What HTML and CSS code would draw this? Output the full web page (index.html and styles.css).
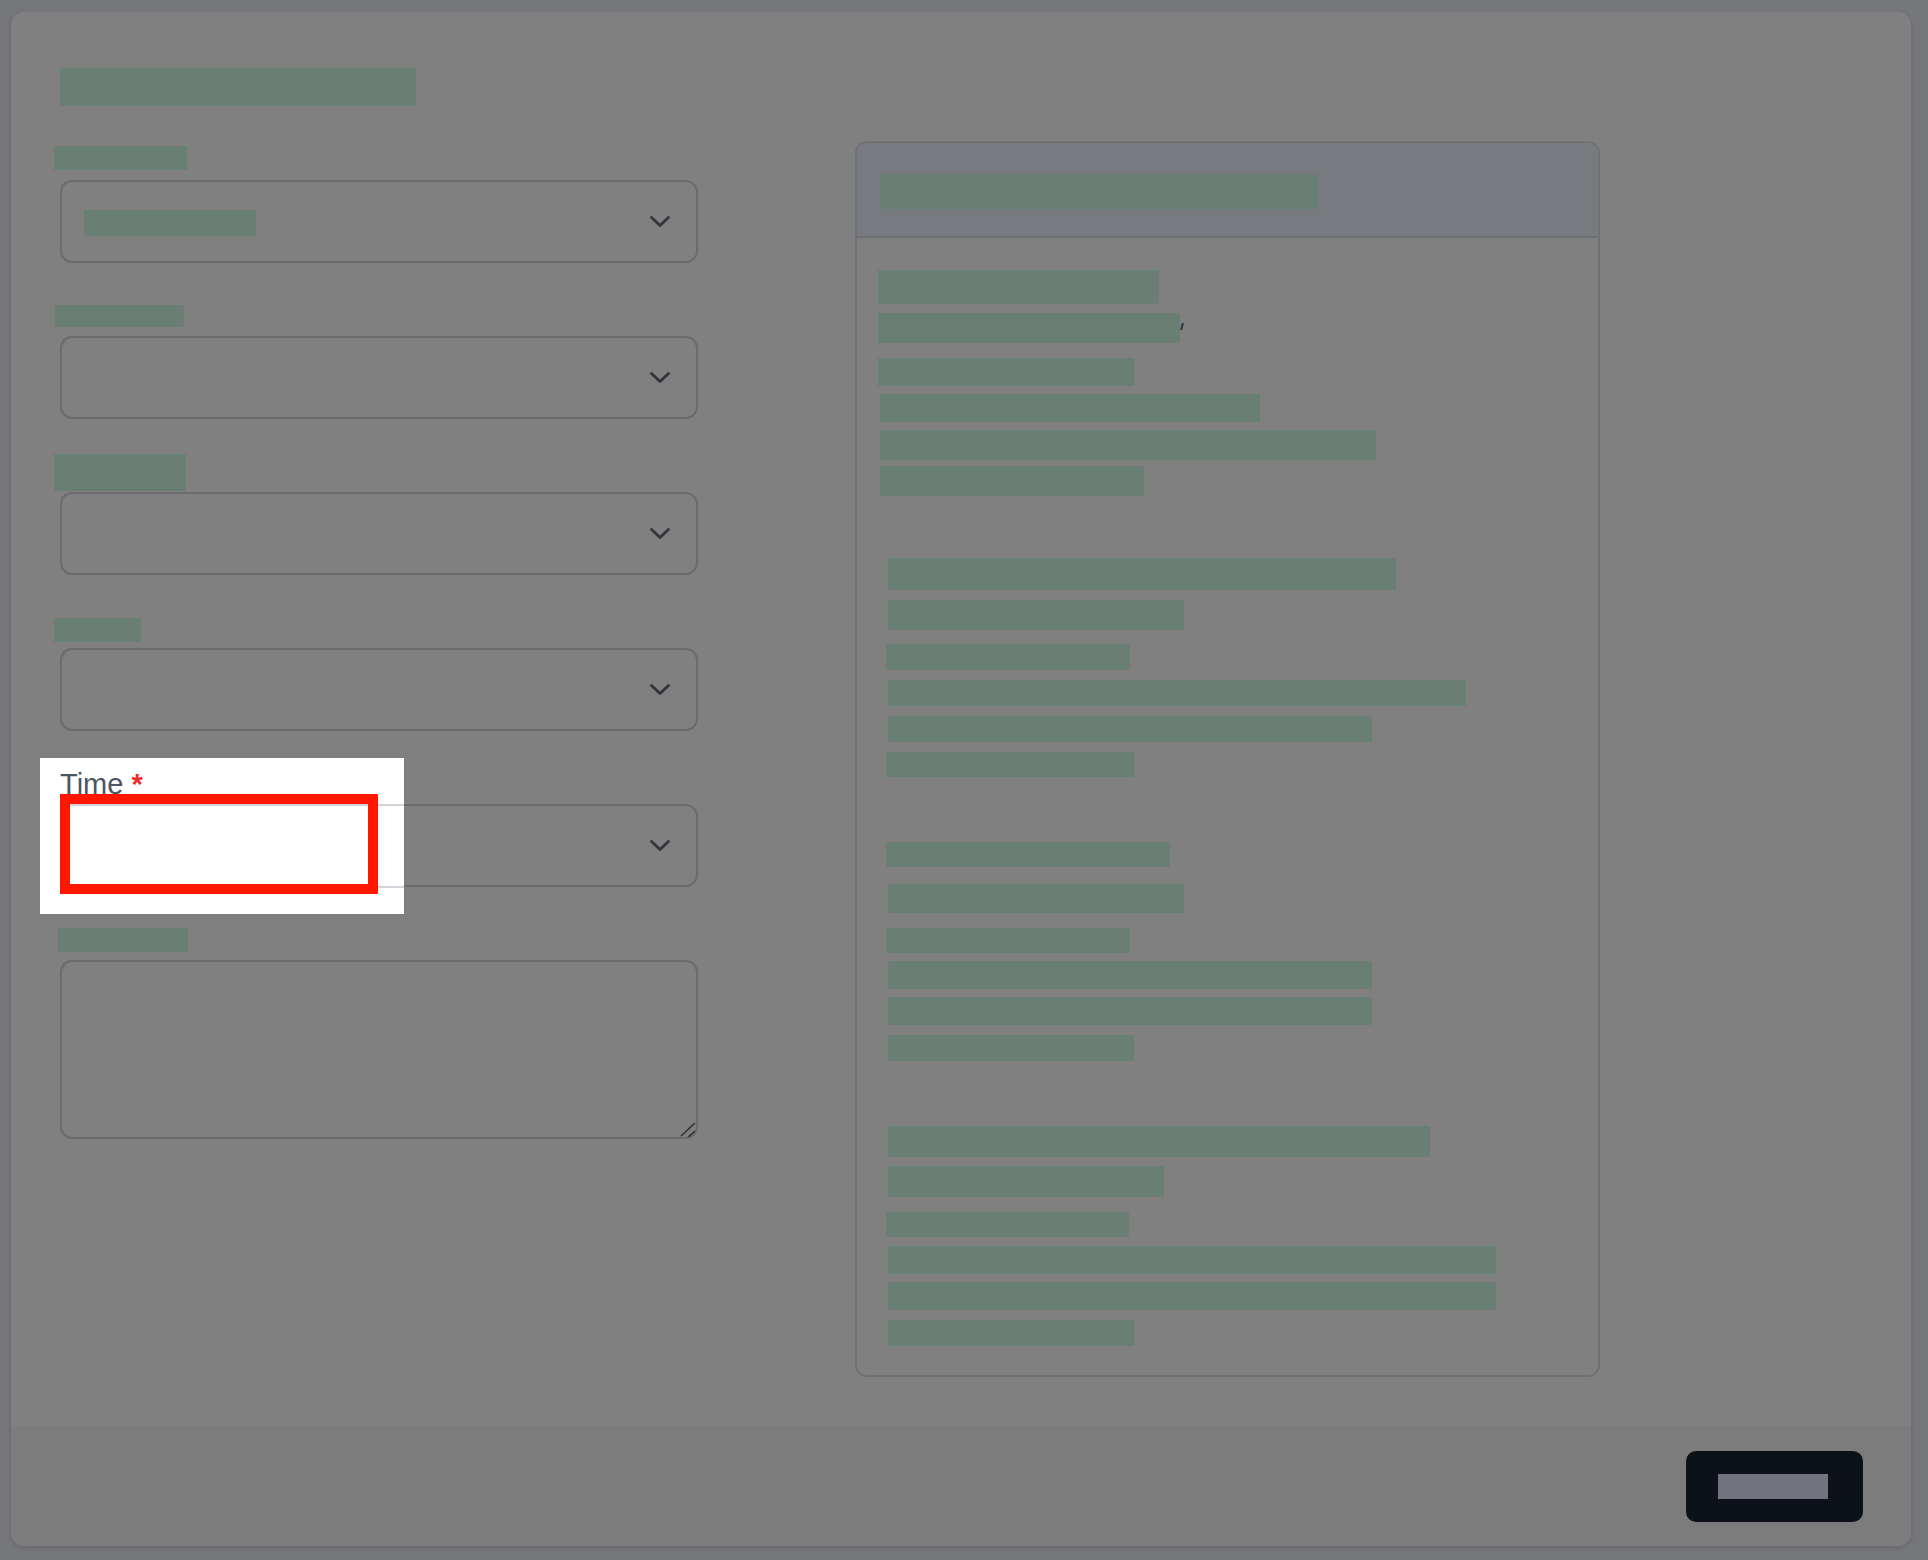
FILE: index.html
```html
<!DOCTYPE html>
<html lang="en">
<head>
<meta charset="utf-8">
<title>Form modal</title>
<link rel="stylesheet" href="styles.css">
</head>
<body>
<div class="modal">
  <div class="modal-main">
    <div class="redact title-bar"></div>
    <div class="layout">
      <div class="form-col">
        <div class="field">
          <div class="label-row"><span class="redact lbl lbl-1"></span></div>
          <div class="select">
            <span class="redact sel-value"></span>
            <svg class="chev" viewBox="0 0 20 11" width="20" height="11"><path d="M1.5 1.5 L10 9.5 L18.5 1.5"/></svg>
          </div>
        </div>
        <div class="field">
          <div class="label-row"><span class="redact lbl lbl-2"></span></div>
          <div class="select">
            <svg class="chev" viewBox="0 0 20 11" width="20" height="11"><path d="M1.5 1.5 L10 9.5 L18.5 1.5"/></svg>
          </div>
        </div>
        <div class="field">
          <div class="label-row"><span class="redact lbl lbl-3"></span></div>
          <div class="select">
            <svg class="chev" viewBox="0 0 20 11" width="20" height="11"><path d="M1.5 1.5 L10 9.5 L18.5 1.5"/></svg>
          </div>
        </div>
        <div class="field">
          <div class="label-row"><span class="redact lbl lbl-4"></span></div>
          <div class="select">
            <svg class="chev" viewBox="0 0 20 11" width="20" height="11"><path d="M1.5 1.5 L10 9.5 L18.5 1.5"/></svg>
          </div>
        </div>
        <div class="field">
          <div class="label-row"><span class="label-text dim">Time <span class="req">*</span></span></div>
          <div class="select">
            <svg class="chev" viewBox="0 0 20 11" width="20" height="11"><path d="M1.5 1.5 L10 9.5 L18.5 1.5"/></svg>
          </div>
        </div>
        <div class="field">
          <div class="label-row"><span class="redact lbl lbl-6"></span></div>
          <div class="textarea">
            <svg class="grip" viewBox="0 0 16 16" width="16" height="16"><path d="M1 15 L15 2 M8 16 L15 10"/></svg>
          </div>
        </div>
      </div>

      <div class="card">
        <div class="card-head"><span class="redact head-bar"></span></div>
        <div class="card-body">
          <span class="redact line" style="--mt:32px;--ml:21px;--w:281px;--h:34px"></span>
          <span class="redact line tick" style="--mt:9px;--ml:21px;--w:302px;--h:30px"></span>
          <span class="redact line" style="--mt:15px;--ml:21px;--w:256px;--h:28px"></span>
          <span class="redact line" style="--mt:8px;--ml:23px;--w:380px;--h:28px"></span>
          <span class="redact line" style="--mt:8px;--ml:23px;--w:496px;--h:30px"></span>
          <span class="redact line" style="--mt:6px;--ml:23px;--w:264px;--h:30px"></span>

          <span class="redact line" style="--mt:62px;--ml:31px;--w:508px;--h:32px"></span>
          <span class="redact line" style="--mt:10px;--ml:31px;--w:296px;--h:30px"></span>
          <span class="redact line" style="--mt:14px;--ml:29px;--w:244px;--h:26px"></span>
          <span class="redact line" style="--mt:10px;--ml:31px;--w:578px;--h:26px"></span>
          <span class="redact line" style="--mt:10px;--ml:31px;--w:484px;--h:26px"></span>
          <span class="redact line" style="--mt:10px;--ml:29px;--w:248px;--h:25px"></span>

          <span class="redact line" style="--mt:65px;--ml:29px;--w:284px;--h:25px"></span>
          <span class="redact line" style="--mt:17px;--ml:31px;--w:296px;--h:29px"></span>
          <span class="redact line" style="--mt:15px;--ml:29px;--w:244px;--h:25px"></span>
          <span class="redact line" style="--mt:8px;--ml:31px;--w:484px;--h:28px"></span>
          <span class="redact line" style="--mt:8px;--ml:31px;--w:484px;--h:28px"></span>
          <span class="redact line" style="--mt:10px;--ml:31px;--w:246px;--h:26px"></span>

          <span class="redact line" style="--mt:65px;--ml:31px;--w:542px;--h:31px"></span>
          <span class="redact line" style="--mt:9px;--ml:31px;--w:276px;--h:31px"></span>
          <span class="redact line" style="--mt:15px;--ml:29px;--w:243px;--h:25px"></span>
          <span class="redact line" style="--mt:9px;--ml:31px;--w:608px;--h:28px"></span>
          <span class="redact line" style="--mt:8px;--ml:31px;--w:608px;--h:28px"></span>
          <span class="redact line" style="--mt:10px;--ml:31px;--w:246px;--h:26px"></span>
        </div>
      </div>
    </div>
  </div>
  <div class="modal-footer">
    <button class="btn-primary" type="button"><span class="btn-label"></span></button>
  </div>
</div>

<div class="spotlight">
  <div class="label-text">Time <span class="req">*</span></div>
  <div class="select-light"></div>
  <div class="annot"></div>
</div>
</body>
</html>
```

FILE: styles.css
```css
html, body {
  margin: 0;
  padding: 0;
}

body {
  background: #76777a;
  font-family: "Liberation Sans", Arial, sans-serif;
  width: 1928px;
  height: 1560px;
  overflow: hidden;
  position: relative;
}

.modal {
  margin: 12px 0 0 11px;
  width: 1900px;
  height: 1534px;
  background: #808080;
  border-radius: 13px;
  box-shadow: 0 2px 5px rgba(0, 0, 0, 0.14);
  display: flex;
  flex-direction: column;
  overflow: hidden;
}

.modal-main {
  flex: 1;
  padding: 56px 0 0 49px;
}

.redact {
  display: block;
  background: #6a7f73;
  border-radius: 1px;
}

.title-bar {
  width: 356px;
  height: 38px;
}

.layout {
  margin-top: 35px;
  display: grid;
  grid-template-columns: 638px 745px;
  column-gap: 157px;
  align-items: start;
}

/* ---------- form column ---------- */
.form-col {
  padding-top: 5px;
  display: flex;
  flex-direction: column;
  gap: 39px;
}

.field {
  display: flex;
  flex-direction: column;
}

.label-row {
  height: 34px;
  display: flex;
  align-items: flex-start;
}

.lbl-1 { width: 133px; height: 24px; margin: 0 0 0 -6px; }
.lbl-2 { width: 129px; height: 22px; margin: 3px 0 0 -5px; }
.lbl-3 { width: 132px; height: 37px; margin: -4px 0 0 -6px; }
.lbl-4 { width: 87px;  height: 24px; margin: 4px 0 0 -6px; }
.lbl-6 { width: 130px; height: 24px; margin: 2px 0 0 -2px; }

.label-text {
  font-size: 29px;
  line-height: 32px;
  color: #4b5563;
}

.label-text.dim {
  color: #262b32;
}

.req {
  color: #ef2b2b;
  font-weight: bold;
}

.select {
  box-sizing: border-box;
  height: 83px;
  border: 2px solid #696b6e;
  border-radius: 12px;
  display: flex;
  align-items: center;
}

.sel-value {
  width: 172px;
  height: 26px;
  margin: 3px 0 0 22px;
}

.chev {
  margin-left: auto;
  margin-right: 26px;
  fill: none;
  stroke: #30343b;
  stroke-width: 2.8;
  stroke-linecap: round;
  stroke-linejoin: round;
}

.textarea {
  box-sizing: border-box;
  height: 179px;
  border: 2px solid #696b6e;
  border-radius: 12px;
  display: flex;
  justify-content: flex-end;
  align-items: flex-end;
}

.grip {
  fill: none;
  stroke: #2e3035;
  stroke-width: 1.6;
}

/* ---------- summary card ---------- */
.card {
  box-sizing: border-box;
  border: 2px solid #707173;
  border-radius: 12px;
  overflow: hidden;
}

.card-head {
  box-sizing: border-box;
  height: 95px;
  background: #777a7f;
  border-bottom: 2px solid #6e6f72;
  padding: 31px 0 0 23px;
}

.head-bar {
  width: 438px;
  height: 35px;
}

.card-body {
  display: flex;
  flex-direction: column;
  align-items: flex-start;
  padding-bottom: 29px;
}

.line {
  margin-top: var(--mt);
  margin-left: var(--ml);
  width: var(--w);
  height: var(--h);
}

.line.tick {
  position: relative;
}

.line.tick::after {
  content: "";
  position: absolute;
  right: -3px;
  top: 10px;
  width: 2px;
  height: 7px;
  background: #2b2f36;
  transform: skewX(-14deg);
}

/* ---------- footer ---------- */
.modal-footer {
  height: 120px;
  background: #7b7c7b;
  display: flex;
  justify-content: flex-end;
  align-items: flex-start;
  padding: 25px 48px 0 0;
  box-sizing: border-box;
}

.btn-primary {
  width: 177px;
  height: 71px;
  border: none;
  border-radius: 10px;
  background: #0d1118;
  padding: 23px 0 0 32px;
  box-sizing: border-box;
  display: flex;
  align-items: flex-start;
}

.btn-label {
  display: block;
  width: 110px;
  height: 25px;
  background: #737380;
}

/* ---------- highlight overlay ---------- */
.spotlight {
  position: absolute;
  left: 40px;
  top: 758px;
  width: 364px;
  height: 156px;
  background: #ffffff;
  overflow: hidden;
  padding: 10px 0 0 20px;
  box-sizing: border-box;
}

.select-light {
  margin-top: 4px;
  box-sizing: border-box;
  width: 638px;
  height: 84px;
  border: 2px solid #d1d5db;
  border-radius: 12px;
}

.annot {
  position: absolute;
  left: 20px;
  top: 36px;
  width: 318px;
  height: 100px;
  box-sizing: border-box;
  border: 10px solid #ff1700;
}
```
